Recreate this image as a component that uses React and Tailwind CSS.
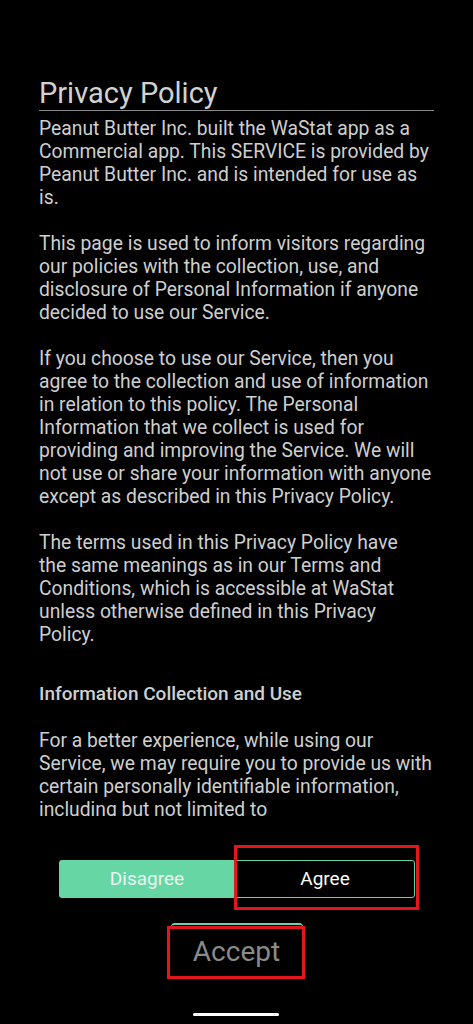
import React from 'react';

// line breaks follow the screenshot exactly
const paragraphs = [
  [
    'Peanut Butter Inc. built the WaStat app as a',
    'Commercial app. This SERVICE is provided by',
    'Peanut Butter Inc. and is intended for use as',
    'is.',
  ],
  [
    'This page is used to inform visitors regarding',
    'our policies with the collection, use, and',
    'disclosure of Personal Information if anyone',
    'decided to use our Service.',
  ],
  [
    'If you choose to use our Service, then you',
    'agree to the collection and use of information',
    'in relation to this policy. The Personal',
    'Information that we collect is used for',
    'providing and improving the Service. We will',
    'not use or share your information with anyone',
    'except as described in this Privacy Policy.',
  ],
  [
    'The terms used in this Privacy Policy have',
    'the same meanings as in our Terms and',
    'Conditions, which is accessible at WaStat',
    'unless otherwise defined in this Privacy',
    'Policy.',
  ],
];

const lastParagraph = [
  'For a better experience, while using our',
  'Service, we may require you to provide us with',
  'certain personally identifiable information,',
  'including but not limited to',
];

const Lines = ({ lines, className = '' }) => (
  <p className={className}>
    {lines.map((l, i) => (
      <span key={i} className="block whitespace-nowrap">
        {l}
      </span>
    ))}
  </p>
);

const App = () => {
  return (
    <div
      className="relative w-[473px] h-[1024px] bg-black overflow-hidden"
      style={{ fontFamily: 'Roboto, "Noto Sans", sans-serif' }}
    >
      <div className="h-[816px] overflow-hidden px-[39px] pt-[76px]">
        <h1 className="text-[29px] leading-[34px] text-[#d2d2d2] border-b border-[#8a8a8a]">
          Privacy Policy
        </h1>
        <div className="mt-[6px] text-[19.3px] leading-[23px] text-[#cfcfcf]">
          {paragraphs.map((p, i) => (
            <Lines key={i} lines={p} className={i > 0 ? 'mt-[23px]' : ''} />
          ))}
          <h2 className="mt-[36px] text-[19px] font-medium text-[#cfcfcf]">
            Information Collection and Use
          </h2>
          <Lines lines={lastParagraph} className="mt-[24px]" />
        </div>
      </div>

      {/* Disagree / Agree toggle */}
      <div className="mt-[44px] mx-auto flex w-[356px] h-[38px]">
        <button className="flex-1 bg-[#66d6a4] text-[#e8f7f0] text-[19px] rounded-l-[3px]">
          Disagree
        </button>
        <button className="flex-1 bg-black text-white text-[19px] border border-[#66d6a4] rounded-r-[3px]">
          Agree
        </button>
      </div>

      {/* Accept */}
      <div className="mt-[25px] mx-auto w-[132px] h-[56px] border-t-2 border-[#66d6a4] rounded-t-[4px] flex items-center justify-center">
        <span className="text-[28px] text-[#8a8a8a]">Accept</span>
      </div>

      {/* Home indicator */}
      <div className="absolute left-[193px] top-[1013px] w-[86px] h-[3px] rounded-full bg-white" />

      {/* Red highlight boxes */}
      <div className="absolute left-[234px] top-[845px] w-[185px] h-[65px] border-[3px] border-[#e3161e]" />
      <div className="absolute left-[167px] top-[926px] w-[138px] h-[53px] border-[3px] border-[#e3161e]" />
    </div>
  );
};

export default App;
